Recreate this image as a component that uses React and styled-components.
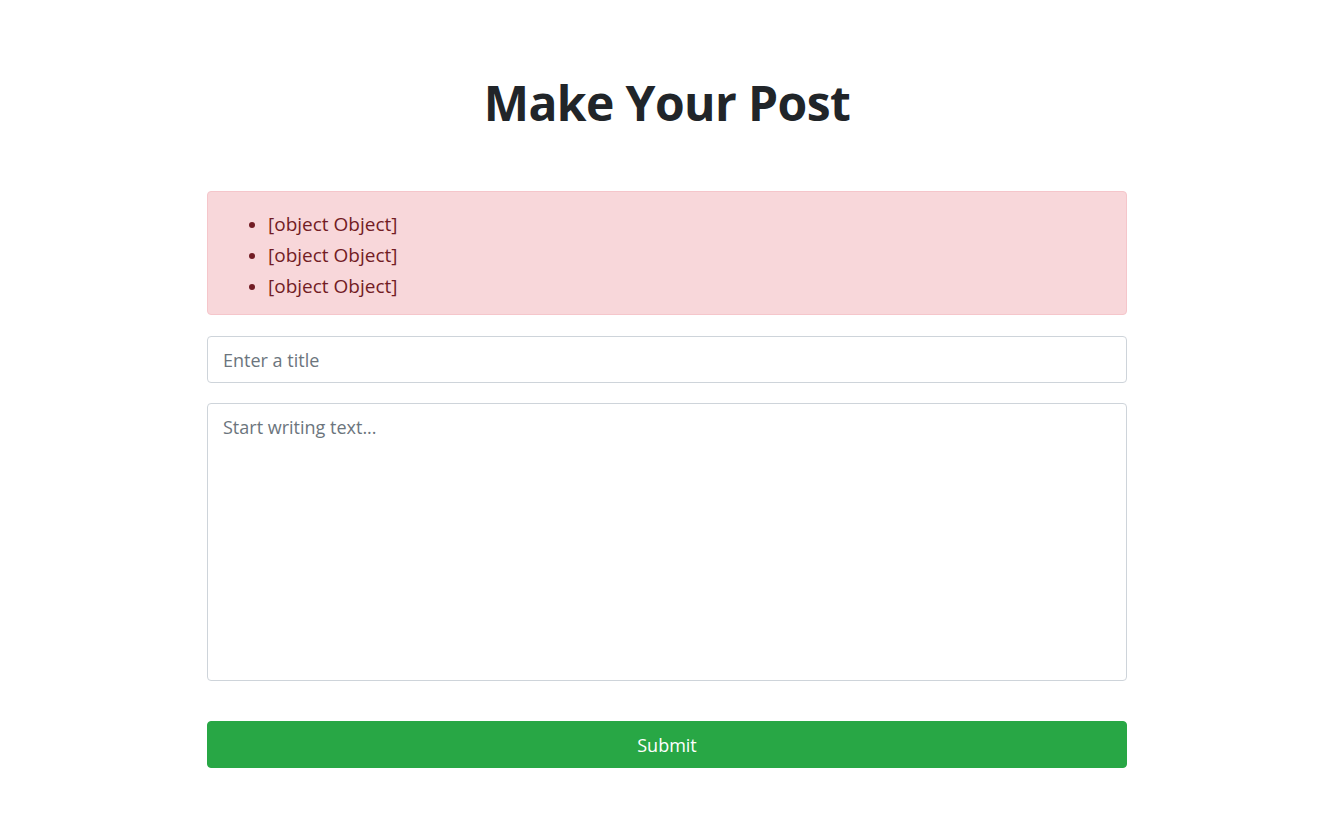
import React from "react";
import styled, {createGlobalStyle} from "styled-components";

const GlobalStyle = createGlobalStyle`
  body {
    margin: 0;
    background: #fff;
    font-family: "Open Sans", "Noto Sans", sans-serif;
    color: #212529;
  }
`;

const Page = styled.main`
  width: 920px;
  margin: 0 auto;
  padding: 70px 0 0 11px;
`;

const Title = styled.h1`
  margin: 0 0 55px;
  text-align: center;
  font-size: 48px;
  font-weight: 700;
  line-height: 66px;
  letter-spacing: -0.6px;
  color: #212529;
`;

const Form = styled.form`
  display: flex;
  flex-direction: column;
`;

const Alert = styled.div`
  box-sizing: border-box;
  background: #f8d7da;
  border: 1px solid #f5c6cb;
  border-radius: 4px;
  color: #721c24;
  padding: 17px 20px 12px;
  margin-bottom: 21px;
`;

const ErrorList = styled.ul`
  margin: 0;
  padding-left: 40px;
  font-size: 19px;
  line-height: 31px;
  li::marker {
    font-size: 17px;
  }
`;

const Field = styled.input`
  box-sizing: border-box;
  width: 100%;
  height: 47px;
  margin-bottom: 20px;
  padding: 0 15px;
  border: 1px solid #ced4da;
  border-radius: 4px;
  font-family: inherit;
  font-size: 18px;
  color: #495057;
  outline: none;
  &::placeholder {
    color: #6c757d;
  }
`;

const TextArea = styled.textarea`
  box-sizing: border-box;
  width: 100%;
  height: 278px;
  margin: 0 0 40px;
  padding: 10px 15px;
  border: 1px solid #ced4da;
  border-radius: 4px;
  font-family: inherit;
  font-size: 18px;
  line-height: 27px;
  resize: none;
  outline: none;
  &::placeholder {
    color: #6c757d;
  }
`;

const SubmitButton = styled.button`
  width: 100%;
  height: 47px;
  border: 1px solid #28a745;
  border-radius: 4px;
  background: #28a745;
  color: #fff;
  font-family: inherit;
  font-size: 18px;
  cursor: pointer;
`;

export default function App() {
    const errors = [{}, {}, {}];
    return (
        <>
            <GlobalStyle/>
            <Page>
                <Title>Make Your Post</Title>
                <Form onSubmit={e => e.preventDefault()}>
                    <Alert>
                        <ErrorList>
                            {errors.map((err, i) => (
                                <li key={i}>{String(err)}</li>
                            ))}
                        </ErrorList>
                    </Alert>
                    <Field type="text" placeholder="Enter a title"/>
                    <TextArea placeholder="Start writing text..."/>
                    <SubmitButton type="submit">Submit</SubmitButton>
                </Form>
            </Page>
        </>
    );
}
